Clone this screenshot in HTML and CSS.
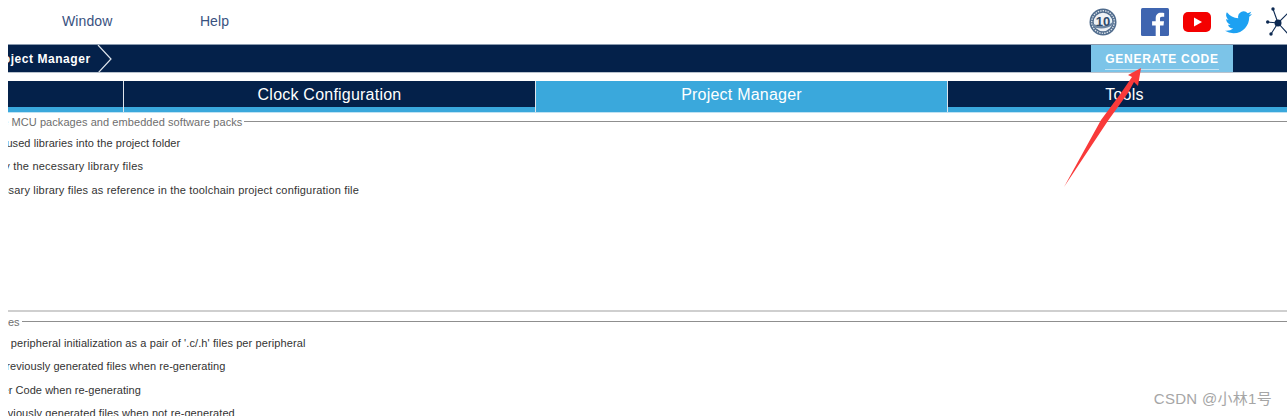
FILE: index.html
```html
<!DOCTYPE html>
<html lang="en">
<head>
<meta charset="utf-8">
<title>Project Manager</title>
<link rel="stylesheet" href="styles.css">
</head>
<body>
<div class="page">
  <header class="menubar">
    <nav class="menu">
      <span class="menu-item window">Window</span>
      <span class="menu-item help">Help</span>
    </nav>
    <div class="social">
      <svg class="badge" width="28" height="28" viewBox="0 0 28 28">
        <circle cx="14" cy="14" r="13.500" fill="#4f6b8c"/>
        <circle cx="14" cy="14" r="11.300" fill="none" stroke="#dbe2ea" stroke-width="1.300" stroke-dasharray="1.500 1"/>
        <circle cx="14" cy="14" r="9.300" fill="#eef1f5"/>
        <path d="M4 15.500C9 19 19 19 24 13.500l0 3C19 21 9 21.500 4 18.500z" fill="#6d86a3"/>
        <text x="14" y="17.500" text-anchor="middle" class="badge-text">10</text>
      </svg>
      <svg class="fb" width="28" height="28" viewBox="0 0 28 28">
        <rect width="28" height="28" rx="1.500" fill="#3f65b0"/>
        <path d="M19 28V17.400h3.500l.5-4.100h-4v-2.600c0-1.200.4-2 2-2h2.200V5c-.4 0-1.700-.2-3.200-.2-3.100 0-5.300 1.900-5.300 5.400v3.100h-3.600v4.100h3.600V28z" fill="#fff"/>
      </svg>
      <svg class="yt" width="28" height="20" viewBox="0 0 28 20">
        <rect width="28" height="20" rx="5" fill="#f40000"/>
        <path d="M11 5.500l8 4.500-8 4.500z" fill="#fff"/>
      </svg>
      <svg class="tw" width="27" height="23" viewBox="0 0 24 20">
        <path d="M24 2.400a9.800 9.800 0 0 1-2.800.8A4.900 4.900 0 0 0 23.300.5a9.800 9.800 0 0 1-3.100 1.200 4.900 4.900 0 0 0-8.400 4.500A14 14 0 0 1 1.700.9a4.900 4.900 0 0 0 1.500 6.600 4.900 4.900 0 0 1-2.200-.6c0 2.400 1.700 4.400 3.900 4.900a4.900 4.900 0 0 1-2.200.1 4.900 4.900 0 0 0 4.600 3.400A9.900 9.900 0 0 1 0 17.300 14 14 0 0 0 7.500 19.500c9.100 0 14.300-7.700 14-14.600A10 10 0 0 0 24 2.400z" fill="#1da1f2"/>
      </svg>
      <svg class="net" width="22" height="30" viewBox="0 0 22 30">
        <path d="M12 16L7 2M12 16L1.500 15M12 16L5 27M12 16L22 6M12 16L22 27" stroke="#0d2a52" stroke-width="1.100"/>
        <circle cx="12" cy="16" r="3.500" fill="#0d2a52"/>
        <circle cx="7" cy="2" r="1.700" fill="#0d2a52"/>
        <circle cx="1.700" cy="15" r="1.700" fill="#0d2a52"/>
        <circle cx="5" cy="27" r="1.700" fill="#0d2a52"/>
      </svg>
    </div>
  </header>

  <div class="crumbbar">
    <div class="crumb">
      <span class="crumb-text">Project Manager</span>
      <svg class="chevron" width="16" height="28" viewBox="0 0 16 28">
        <path d="M1 0l13 14L1 28" fill="none" stroke="#dfe5ec" stroke-width="1.200"/>
      </svg>
    </div>
    <button class="generate"><span>GENERATE CODE</span></button>
  </div>

  <div class="tabs">
    <div class="tab first"></div>
    <div class="tab">Clock Configuration</div>
    <div class="tab active">Project Manager</div>
    <div class="tab">Tools</div>
  </div>
  <div class="tabline"></div>

  <section class="group upper">
    <div class="legend"><span class="legend-text first-legend">STM32Cube MCU packages and embedded software packs</span><i></i></div>
    <div class="row r1">Copy all used libraries into the project folder</div>
    <div class="row r2">Copy only the necessary library files</div>
    <div class="row r3">Add necessary library files as reference in the toolchain project configuration file</div>
  </section>

  <div class="divider"></div>

  <section class="group lower">
    <div class="legend"><span class="legend-text second-legend">Generated files</span><i></i></div>
    <div class="row r4">Generate peripheral initialization as a pair of '.c/.h' files per peripheral</div>
    <div class="row r5">Backup previously generated files when re-generating</div>
    <div class="row r6">Keep User Code when re-generating</div>
    <div class="row r7">Delete previously generated files when not re-generated</div>
  </section>
</div>

<svg class="arrow" width="100" height="150" viewBox="0 0 100 150">
  <path d="M0 147L37 80L57 53L68 37L64 35L77 28L74 46L70 42L64 53L44.500 80z" fill="#f93a3a"/>
</svg>
<div class="watermark">CSDN @小林1号</div>
</body>
</html>
```
FILE: styles.css
```css
html, body {
  height: 100%;
  overflow: hidden;
  background: #fff;
}
body {
  margin: 0;
  position: relative;
  font-family: "Liberation Sans", Arial, sans-serif;
}
.page {
  margin-left: 8px;
  height: 416px;
  overflow: hidden;
}
.menubar {
  height: 44px;
  display: flex;
  align-items: center;
  justify-content: space-between;
}
.menu {
  display: flex;
  font-size: 14px;
  letter-spacing: .1px;
  color: #39527f;
  padding-bottom: 2px;
}
.menu-item.window { margin-left: 54px; }
.menu-item.help { margin-left: 87.500px; }
.social {
  display: flex;
  align-items: center;
  width: 198px;
  flex: none;
  overflow: hidden;
}
.badge { flex: none; }
.badge-text { font: bold 13px "Liberation Sans", sans-serif; fill: #2f4a6b; }
.fb { margin-left: 24px; flex: none; }
.yt { margin-left: 14px; flex: none; }
.tw { margin-left: 14px; flex: none; }
.net { margin-left: 14px; flex: none; }
.crumbbar {
  height: 29px;
  box-sizing: border-box;
  background: #04214a;
  border-top: 1px solid #8a9aae;
  border-bottom: 1px solid #b9c2cd;
  display: flex;
  align-items: center;
  justify-content: space-between;
}
.crumb {
  display: flex;
  align-items: center;
  height: 100%;
  overflow: hidden;
}
.crumb-text {
  margin-left: -19px;
  color: #fff;
  font-size: 12px;
  font-weight: 700;
  white-space: nowrap;
  letter-spacing: .55px;
}
.chevron { margin-left: 6px; }
.generate {
  width: 142px;
  height: 27px;
  margin-right: 54px;
  padding: 5px 0 0;
  border: 0;
  background: #7cc4e8;
  color: #fff;
  font: 700 12px "Liberation Sans", Arial, sans-serif;
  letter-spacing: .75px;
}
.generate span {
  display: inline-block;
  border-bottom: 1px solid #c5e3f3;
  padding-bottom: 3px;
}
.tabs {
  margin-top: 8px;
  margin-right: -14px;
  height: 26px;
  display: grid;
  grid-template-columns: 115px 412px 412px 1fr;
  background: #04214a;
}
.tab {
  display: flex;
  align-items: flex-start;
  justify-content: center;
  padding-top: 5px;
  box-sizing: border-box;
  color: #fff;
  font-size: 16px;
  letter-spacing: .22px;
  border-left: 1px solid #dfe5ec;
}
.tab.first { border-left: 0; }
.tab.active {
  background: #3aa8dc;
  height: 31px;
}
.tabline {
  height: 6px;
  box-sizing: border-box;
  background: #3aa8dc;
  border-bottom: 1px solid #bfe2f3;
}
.group { overflow: hidden; }
.legend {
  display: flex;
  align-items: center;
  height: 12px;
  color: #6e6e6e;
  font-size: 11px;
  letter-spacing: .07px;
  margin-top: 2px;
}
.legend i {
  flex: 1;
  height: 1px;
  background: #8f8f8f;
  margin-left: 2px;
}
.legend-text { white-space: nowrap; padding-top: 1px; }
.first-legend { margin-left: -62px; }
.second-legend { margin-left: -64px; }
.row {
  height: 23.500px;
  display: flex;
  align-items: center;
  color: #333;
  font-size: 11px;
  white-space: nowrap;
}
.upper { height: 197px; }
.upper .r1 { margin-top: 4px; }
.r1 { margin-left: -45px; letter-spacing: .07px; }
.r2 { margin-left: -49px; letter-spacing: .22px; }
.r3 { margin-left: -53px; letter-spacing: .18px; }
.divider {
  height: 2px;
  background: #cfcfcf;
}
.lower .legend { margin-top: 3px; }
.lower .r4 { margin-top: 4px; }
.r4 { margin-left: -47px; letter-spacing: .1px; }
.r5 { margin-left: -48px; letter-spacing: .06px; }
.r6 { margin-left: -48px; letter-spacing: .05px; }
.r7 { margin-left: -52px; letter-spacing: .1px; }
.arrow {
  position: absolute;
  left: 1064px;
  top: 40px;
}
.watermark {
  position: absolute;
  right: 15px;
  top: 387px;
  color: #a6a6a6;
  font: 15px "Liberation Sans", "Noto Sans CJK SC", sans-serif;
  letter-spacing: .3px;
}
```
